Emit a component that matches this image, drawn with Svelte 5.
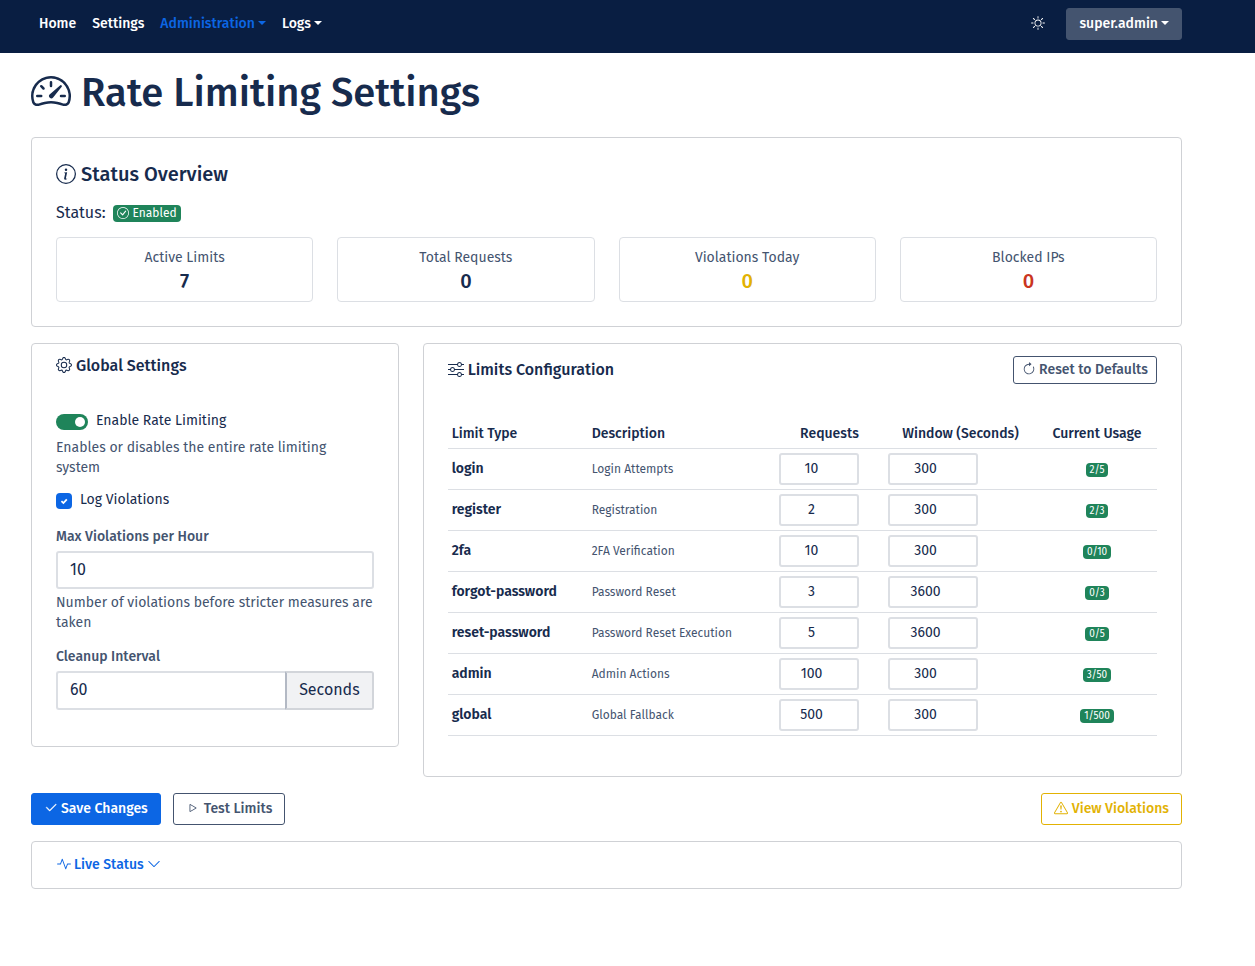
<script lang="ts">
  type Glyph = { paths: string[]; evenodd?: boolean };

  const glyphs: Record<string, Glyph> = {
    speedometer: {
      evenodd: true,
      paths: [
        'M8 4a.5.5 0 0 1 .5.5V6a.5.5 0 0 1-1 0V4.5A.5.5 0 0 1 8 4M3.732 5.732a.5.5 0 0 1 .707 0l.915.914a.5.5 0 1 1-.708.708l-.914-.915a.5.5 0 0 1 0-.707M2 10a.5.5 0 0 1 .5-.5h1.586a.5.5 0 0 1 0 1H2.5A.5.5 0 0 1 2 10m9.5 0a.5.5 0 0 1 .5-.5h1.5a.5.5 0 0 1 0 1H12a.5.5 0 0 1-.5-.5m.754-4.246a.39.39 0 0 0-.527-.02L7.547 9.31a.91.91 0 1 0 1.302 1.258l3.434-4.297a.39.39 0 0 0-.029-.518z',
        'M0 10a8 8 0 1 1 15.547 2.661c-.442 1.253-1.845 1.602-2.932 1.25C11.309 13.488 9.475 13 8 13c-1.474 0-3.31.488-4.615.911-1.087.352-2.49.003-2.932-1.25A8 8 0 0 1 0 10m8-7a7 7 0 0 0-6.603 9.329c.203.575.923.876 1.68.63C4.397 12.533 6.358 12 8 12s3.604.532 4.923.96c.757.245 1.477-.056 1.68-.631A7 7 0 0 0 8 3',
      ],
    },
    info: {
      paths: [
        'M8 15A7 7 0 1 1 8 1a7 7 0 0 1 0 14m0 1A8 8 0 1 0 8 0a8 8 0 0 0 0 16',
        'm8.93 6.588-2.29.287-.082.38.45.083c.294.07.352.176.288.469l-.738 3.468c-.194.897.105 1.319.808 1.319.545 0 1.178-.252 1.465-.598l.088-.416c-.2.176-.492.246-.686.246-.275 0-.375-.193-.304-.533zM9 4.5a1 1 0 1 1-2 0 1 1 0 0 1 2 0',
      ],
    },
    checkCircle: {
      paths: [
        'M8 15A7 7 0 1 1 8 1a7 7 0 0 1 0 14m0 1A8 8 0 1 0 8 0a8 8 0 0 0 0 16',
        'm10.97 4.97-.02.022-3.473 4.425-2.093-2.094a.75.75 0 0 0-1.06 1.06L6.97 11.03a.75.75 0 0 0 1.079-.02l3.992-4.99a.75.75 0 0 0-1.071-1.05',
      ],
    },
    gear: {
      paths: [
        'M8 4.754a3.246 3.246 0 1 0 0 6.492 3.246 3.246 0 0 0 0-6.492M5.754 8a2.246 2.246 0 1 1 4.492 0 2.246 2.246 0 0 1-4.492 0',
        'M9.796 1.343c-.527-1.79-3.065-1.79-3.592 0l-.094.319a.873.873 0 0 1-1.255.52l-.292-.16c-1.64-.892-3.433.902-2.54 2.541l.159.292a.873.873 0 0 1-.52 1.255l-.319.094c-1.79.527-1.79 3.065 0 3.592l.319.094a.873.873 0 0 1 .52 1.255l-.16.292c-.892 1.64.901 3.434 2.541 2.54l.292-.159a.873.873 0 0 1 1.255.52l.094.319c.527 1.79 3.065 1.79 3.592 0l.094-.319a.873.873 0 0 1 1.255-.52l.292.16c1.64.893 3.434-.902 2.54-2.541l-.159-.292a.873.873 0 0 1 .52-1.255l.319-.094c1.79-.527 1.79-3.065 0-3.592l-.319-.094a.873.873 0 0 1-.52-1.255l.16-.292c.893-1.64-.902-3.433-2.541-2.54l-.292.159a.873.873 0 0 1-1.255-.52zm-2.633.283c.246-.835 1.428-.835 1.674 0l.094.319a1.873 1.873 0 0 0 2.693 1.115l.291-.16c.764-.415 1.6.42 1.184 1.185l-.159.292a1.873 1.873 0 0 0 1.116 2.692l.318.094c.835.246.835 1.428 0 1.674l-.319.094a1.873 1.873 0 0 0-1.115 2.693l.16.291c.415.764-.42 1.6-1.185 1.184l-.291-.159a1.873 1.873 0 0 0-2.693 1.116l-.094.318c-.246.835-1.428.835-1.674 0l-.094-.319a1.873 1.873 0 0 0-2.692-1.115l-.292.16c-.764.415-1.6-.42-1.184-1.185l.159-.291A1.873 1.873 0 0 0 1.945 8.93l-.319-.094c-.835-.246-.835-1.428 0-1.674l.319-.094A1.873 1.873 0 0 0 3.06 4.377l-.16-.292c-.415-.764.42-1.6 1.185-1.184l.292.159a1.873 1.873 0 0 0 2.692-1.115z',
      ],
    },
    sliders: {
      evenodd: true,
      paths: [
        'M11.5 2a1.5 1.5 0 1 0 0 3 1.5 1.5 0 0 0 0-3M9.05 3a2.5 2.5 0 0 1 4.9 0H16v1h-2.05a2.5 2.5 0 0 1-4.9 0H0V3zM4.5 7a1.5 1.5 0 1 0 0 3 1.5 1.5 0 0 0 0-3M2.05 8a2.5 2.5 0 0 1 4.9 0H16v1H6.95a2.5 2.5 0 0 1-4.9 0H0V8zm9.45 4a1.5 1.5 0 1 0 0 3 1.5 1.5 0 0 0 0-3m-2.45 1a2.5 2.5 0 0 1 4.9 0H16v1h-2.05a2.5 2.5 0 0 1-4.9 0H0v-1z',
      ],
    },
    refresh: {
      paths: [
        'M8 3a5 5 0 1 0 4.546 2.914.5.5 0 0 1 .908-.417A6 6 0 1 1 8 2z',
        'M8 4.466V.534a.25.25 0 0 1 .41-.192l2.36 1.966c.12.1.12.284 0 .384L8.41 4.658A.25.25 0 0 1 8 4.466',
      ],
    },
    check: {
      paths: [
        'M13.854 3.646a.5.5 0 0 1 0 .708l-7 7a.5.5 0 0 1-.708 0l-3.5-3.5a.5.5 0 1 1 .708-.708L6.5 10.293l6.646-6.647a.5.5 0 0 1 .708 0',
      ],
    },
    play: {
      paths: [
        'M10.804 8 5 4.633v6.734zm.792-.696a.802.802 0 0 1 0 1.392l-6.363 3.692C4.713 12.69 4 12.345 4 11.692V4.308c0-.653.713-.998 1.233-.696z',
      ],
    },
    warning: {
      paths: [
        'M7.938 2.016A.13.13 0 0 1 8.002 2a.13.13 0 0 1 .063.016.15.15 0 0 1 .054.057l6.857 11.667c.036.06.035.124.002.183a.2.2 0 0 1-.054.06.1.1 0 0 1-.066.017H1.146a.1.1 0 0 1-.066-.017.2.2 0 0 1-.054-.06.18.18 0 0 1 .002-.183L7.884 2.073a.15.15 0 0 1 .054-.057m1.044-.45a1.13 1.13 0 0 0-1.96 0L.165 13.233c-.457.778.091 1.767.98 1.767h13.713c.889 0 1.438-.99.98-1.767z',
        'M7.002 12a1 1 0 1 1 2 0 1 1 0 0 1-2 0M7.1 5.995a.905.905 0 1 1 1.8 0l-.35 3.507a.552.552 0 0 1-1.1 0z',
      ],
    },
    activity: {
      evenodd: true,
      paths: [
        'M6 2a.5.5 0 0 1 .47.33L10 12.036l1.53-4.208A.5.5 0 0 1 12 7.5h3.5a.5.5 0 0 1 0 1h-3.15l-1.88 5.17a.5.5 0 0 1-.94 0L6 3.964 4.47 8.171A.5.5 0 0 1 4 8.5H.5a.5.5 0 0 1 0-1h3.15l1.88-5.17A.5.5 0 0 1 6 2',
      ],
    },
    chevron: {
      evenodd: true,
      paths: [
        'M1.646 4.646a.5.5 0 0 1 .708 0L8 10.293l5.646-5.647a.5.5 0 0 1 .708.708l-6 6a.5.5 0 0 1-.708 0l-6-6a.5.5 0 0 1 0-.708',
      ],
    },
    sun: {
      paths: [
        'M8 11a3 3 0 1 1 0-6 3 3 0 0 1 0 6m0 1a4 4 0 1 0 0-8 4 4 0 0 0 0 8M8 0a.5.5 0 0 1 .5.5v2a.5.5 0 0 1-1 0v-2A.5.5 0 0 1 8 0m0 13a.5.5 0 0 1 .5.5v2a.5.5 0 0 1-1 0v-2A.5.5 0 0 1 8 13m8-5a.5.5 0 0 1-.5.5h-2a.5.5 0 0 1 0-1h2a.5.5 0 0 1 .5.5M3 8a.5.5 0 0 1-.5.5h-2a.5.5 0 0 1 0-1h2A.5.5 0 0 1 3 8m10.657-5.657a.5.5 0 0 1 0 .707l-1.414 1.415a.5.5 0 1 1-.707-.708l1.414-1.414a.5.5 0 0 1 .707 0m-9.193 9.193a.5.5 0 0 1 0 .707L3.05 13.657a.5.5 0 0 1-.707-.707l1.414-1.414a.5.5 0 0 1 .707 0m9.193 2.121a.5.5 0 0 1-.707 0l-1.414-1.414a.5.5 0 0 1 .707-.707l1.414 1.414a.5.5 0 0 1 0 .707M4.464 4.465a.5.5 0 0 1-.707 0L2.343 3.05a.5.5 0 1 1 .707-.707l1.414 1.414a.5.5 0 0 1 0 .708',
      ],
    },
  };

  const stats = [
    { label: 'Active Limits', value: 7, tone: '' },
    { label: 'Total Requests', value: 0, tone: '' },
    { label: 'Violations Today', value: 0, tone: 'warn' },
    { label: 'Blocked IPs', value: 0, tone: 'danger' },
  ];

  let limits = $state([
    { type: 'login', description: 'Login Attempts', requests: 10, window: 300, usage: '2/5' },
    { type: 'register', description: 'Registration', requests: 2, window: 300, usage: '2/3' },
    { type: '2fa', description: '2FA Verification', requests: 10, window: 300, usage: '0/10' },
    { type: 'forgot-password', description: 'Password Reset', requests: 3, window: 3600, usage: '0/3' },
    { type: 'reset-password', description: 'Password Reset Execution', requests: 5, window: 3600, usage: '0/5' },
    { type: 'admin', description: 'Admin Actions', requests: 100, window: 300, usage: '3/50' },
    { type: 'global', description: 'Global Fallback', requests: 500, window: 300, usage: '1/500' },
  ]);

  let enabled = $state(true);
  let logViolations = $state(true);
  let maxViolations = $state(10);
  let cleanupInterval = $state(60);
</script>

{#snippet icon(name: string, size: number)}
  <svg class="icon" width={size} height={size} viewBox="0 0 16 16" fill="currentColor" aria-hidden="true">
    {#each glyphs[name].paths as d}
      <path {d} fill-rule={glyphs[name].evenodd ? 'evenodd' : 'nonzero'} />
    {/each}
  </svg>
{/snippet}

<nav class="navbar">
  <div class="links">
    <a href="#home">Home</a>
    <a href="#settings">Settings</a>
    <a href="#administration" class="active">Administration<span class="caret"></span></a>
    <a href="#logs">Logs<span class="caret"></span></a>
  </div>
  <div class="account">
    <button class="theme" type="button" aria-label="Theme">{@render icon('sun', 14)}</button>
    <button class="user" type="button">super.admin<span class="caret"></span></button>
  </div>
</nav>

<main>
  <h1>{@render icon('speedometer', 40)}Rate Limiting Settings</h1>

  <section class="card overview">
    <h2>{@render icon('info', 20)}Status Overview</h2>
    <p class="status">Status: <span class="badge state">{@render icon('checkCircle', 12)}Enabled</span></p>
    <div class="stats">
      {#each stats as stat}
        <div class="stat">
          <span class="stat-label">{stat.label}</span>
          <strong class={stat.tone}>{stat.value}</strong>
        </div>
      {/each}
    </div>
  </section>

  <div class="columns">
    <section class="card">
      <header><h3>{@render icon('gear', 16)}Global Settings</h3></header>
      <div class="body form">
        <label class="tick">
          <input class="switch" type="checkbox" role="switch" bind:checked={enabled} />Enable Rate Limiting
        </label>
        <p class="help">Enables or disables the entire rate limiting system</p>
        <label class="tick log">
          <input class="box" type="checkbox" bind:checked={logViolations} />Log Violations
        </label>
        <label class="caption" for="max-violations">Max Violations per Hour</label>
        <input id="max-violations" class="field" type="number" bind:value={maxViolations} />
        <p class="help">Number of violations before stricter measures are taken</p>
        <label class="caption" for="cleanup">Cleanup Interval</label>
        <div class="group">
          <input id="cleanup" class="field" type="number" bind:value={cleanupInterval} />
          <span class="unit">Seconds</span>
        </div>
      </div>
    </section>

    <section class="card">
      <header>
        <h3>{@render icon('sliders', 16)}Limits Configuration</h3>
        <button class="btn small outline" type="button">{@render icon('refresh', 14)}Reset to Defaults</button>
      </header>
      <div class="body">
        <table>
          <colgroup>
            <col class="c-type" /><col /><col class="c-requests" /><col class="c-window" /><col class="c-usage" />
          </colgroup>
          <thead>
            <tr>
              <th scope="col">Limit Type</th>
              <th scope="col">Description</th>
              <th scope="col" class="center">Requests</th>
              <th scope="col" class="center">Window (Seconds)</th>
              <th scope="col" class="center">Current Usage</th>
            </tr>
          </thead>
          <tbody>
            {#each limits as limit (limit.type)}
              <tr>
                <td class="type">{limit.type}</td>
                <td class="description">{limit.description}</td>
                <td><input class="cell" type="number" aria-label="{limit.type} requests" bind:value={limit.requests} /></td>
                <td><input class="cell wide" type="number" aria-label="{limit.type} window" bind:value={limit.window} /></td>
                <td class="center"><span class="badge usage">{limit.usage}</span></td>
              </tr>
            {/each}
          </tbody>
        </table>
      </div>
    </section>
  </div>

  <div class="actions">
    <button class="btn primary" type="button">{@render icon('check', 14)}Save Changes</button>
    <button class="btn outline" type="button">{@render icon('play', 14)}Test Limits</button>
    <button class="btn warning" type="button">{@render icon('warning', 14)}View Violations</button>
  </div>

  <section class="card live">
    <button type="button" aria-expanded="false">{@render icon('activity', 14)}Live Status{@render icon('chevron', 14)}</button>
  </section>
</main>

<style>
  :global(body) {
    margin: 0;
    background: #fff;
    color: #172b4d;
    font-family: 'Fira Sans', Roboto, sans-serif;
    font-size: 14px;
    line-height: 20px;
  }
  *,
  *::before {
    box-sizing: border-box;
  }
  button,
  input {
    font: inherit;
    color: inherit;
    margin: 0;
  }
  button {
    cursor: pointer;
  }
  h1,
  h2,
  h3,
  p {
    margin: 0;
    font-weight: 500;
  }
  p {
    font-weight: 400;
  }
  .icon {
    flex: none;
    margin-bottom: 2px;
  }

  .navbar {
    display: flex;
    justify-content: space-between;
    padding: 8px 73px 13px 31px;
    background: #091e42;
    color: #fff;
    font-weight: 500;
  }
  .links,
  .account {
    display: flex;
    align-items: center;
  }
  .links a {
    display: flex;
    align-items: center;
    padding: 5px 8px;
    color: inherit;
    text-decoration: none;
  }
  .links a.active {
    color: #0c66e4;
  }
  .caret {
    margin-left: 3px;
    margin-bottom: 3px;
    border: 4px solid transparent;
    border-top-color: currentColor;
    border-bottom: 0;
  }
  .account {
    gap: 21px;
  }
  .theme {
    display: flex;
    padding: 0;
    border: 0;
    background: none;
  }
  .user {
    display: flex;
    align-items: center;
    padding: 5px 12px;
    border: 1px solid #44546f;
    border-radius: 3px;
    background: #44546f;
  }

  main {
    padding: 16px 73px 24px 31px;
  }
  h1 {
    display: flex;
    align-items: center;
    gap: 10px;
    margin-bottom: 20px;
    font-size: 40px;
    line-height: 48px;
  }
  h1 .icon {
    margin-bottom: 4px;
  }
  h2 {
    display: flex;
    align-items: center;
    gap: 5px;
    margin-bottom: 15px;
    font-size: 20px;
    line-height: 24px;
  }
  h2 .icon {
    margin-bottom: 0;
  }
  h3 {
    display: flex;
    align-items: center;
    gap: 4px;
    font-size: 16px;
    line-height: 20px;
  }
  .card {
    border: 1px solid #cfd1d5;
    border-radius: 4px;
    background: #fff;
  }
  .overview {
    padding: 24px;
  }
  .status {
    display: flex;
    align-items: center;
    gap: 7px;
    margin-bottom: 12px;
    font-size: 16px;
    line-height: 24px;
  }
  .badge {
    display: inline-flex;
    align-items: center;
    padding: 0 4px;
    border-radius: 4px;
    background: #1f845a;
    color: #fff;
  }
  .state {
    gap: 4px;
    margin-top: 1px;
    font-size: 12px;
    line-height: 17px;
  }
  .usage {
    margin-top: 2px;
    font-size: 10px;
    line-height: 14px;
    vertical-align: middle;
  }
  .stats {
    display: grid;
    grid-template-columns: repeat(4, 1fr);
    gap: 24px;
  }
  .stat {
    display: flex;
    flex-direction: column;
    align-items: center;
    padding: 9px 8px 8px;
    border: 1px solid #dcdfe4;
    border-radius: 4px;
  }
  .stat-label {
    color: #44546f;
    line-height: 22px;
  }
  .stat strong {
    font-size: 20px;
    font-weight: 500;
    line-height: 24px;
  }
  .stat .warn {
    color: #e2b203;
  }
  .stat .danger {
    color: #ca3521;
  }

  .columns {
    display: grid;
    grid-template-columns: calc((100% - 48px) / 3) minmax(0, 1fr);
    gap: 24px;
    align-items: start;
    margin-top: 16px;
  }
  .card header {
    display: flex;
    align-items: center;
    justify-content: space-between;
    padding: 12px 24px;
  }
  .body {
    padding: 22px 24px 40px;
  }
  .form {
    display: flex;
    flex-direction: column;
    padding-top: 23px;
    padding-bottom: 36px;
  }
  .tick {
    display: flex;
    align-items: center;
    gap: 8px;
  }
  .tick input {
    appearance: none;
    height: 16px;
    margin-top: 2px;
    background: #dcdfe4 center / 100% no-repeat;
  }
  .switch {
    display: flex;
    align-items: center;
    width: 32px;
    padding: 0 3px;
    border-radius: 8px;
  }
  .switch::before {
    content: '';
    width: 10px;
    height: 10px;
    border-radius: 50%;
    background: #fff;
  }
  .switch:checked {
    justify-content: flex-end;
    background-color: #1f845a;
  }
  .box {
    width: 16px;
    border-radius: 4px;
  }
  .box:checked {
    background-color: #0c66e4;
    background-image: url("data:image/svg+xml,%3Csvg xmlns='http://www.w3.org/2000/svg' viewBox='0 0 16 16'%3E%3Cpath d='M5.4 8.2l2 1.8 3.4-3.7' fill='none' stroke='white' stroke-width='1.8'/%3E%3C/svg%3E");
  }
  .log {
    margin: 12px 0 17px;
  }
  .help {
    margin-top: 7px;
    color: #44546f;
  }
  .field + .help {
    margin: 4px 0 14px;
  }
  .caption {
    margin-bottom: 4px;
    color: #44546f;
    font-weight: 500;
  }
  .field {
    width: 100%;
    min-width: 0;
    height: 38px;
    padding: 0 12px 2px;
    border: 2px solid #dcdfe4;
    border-radius: 3px;
    background: #fff;
    font-size: 16px;
  }
  .group {
    display: flex;
    height: 39px;
  }
  .group .field {
    height: 100%;
    border-right: 0;
    border-radius: 3px 0 0 3px;
  }
  .unit {
    display: flex;
    align-items: center;
    padding: 0 12px 2px;
    border: 2px solid #d2d5da;
    border-left-color: #b3b9c4;
    border-radius: 0 3px 3px 0;
    background: #f1f2f4;
    font-size: 16px;
  }

  table {
    width: 100%;
    border-collapse: collapse;
    table-layout: fixed;
  }
  .c-type {
    width: 140px;
  }
  .c-requests {
    width: 109px;
  }
  .c-window {
    width: 153px;
  }
  .c-usage {
    width: 120px;
  }
  th,
  td {
    padding: 4px;
    border-bottom: 1px solid #dcdfe4;
    text-align: left;
    vertical-align: middle;
  }
  th {
    padding: 6px 4px 4px;
    font-weight: 500;
  }
  td {
    height: 41px;
  }
  .center {
    text-align: center;
  }
  .type {
    font-weight: 600;
  }
  .description {
    color: #44546f;
    font-size: 12px;
  }
  .cell {
    display: block;
    width: 80px;
    height: 32px;
    padding: 0 6px 2px;
    border: 2px solid #dcdfe4;
    border-radius: 3px;
    background: #fff;
    text-align: center;
  }
  .wide {
    width: 90px;
  }

  .btn {
    display: inline-flex;
    align-items: center;
    gap: 4px;
    height: 32px;
    padding: 0 12px;
    border: 1px solid currentColor;
    border-radius: 3px;
    background: #fff;
    font-weight: 500;
  }
  .btn.small {
    gap: 3px;
    height: 28px;
    padding: 0 8px;
  }
  .outline {
    color: #44546f;
  }
  .btn.primary {
    gap: 3px;
    border-color: #0c66e4;
    background: #0c66e4;
    color: #fff;
  }
  .primary .icon {
    stroke: currentColor;
    stroke-width: 0.5;
  }
  .warning {
    margin-left: auto;
    color: #e2b203;
  }
  .actions {
    display: flex;
    gap: 12px;
    margin: 16px 0;
  }
  .live {
    padding: 11px 24px;
  }
  .live button {
    display: flex;
    align-items: center;
    gap: 3px;
    padding: 2px 1px;
    border: 0;
    background: none;
    color: #0c66e4;
    font-weight: 500;
  }
</style>
